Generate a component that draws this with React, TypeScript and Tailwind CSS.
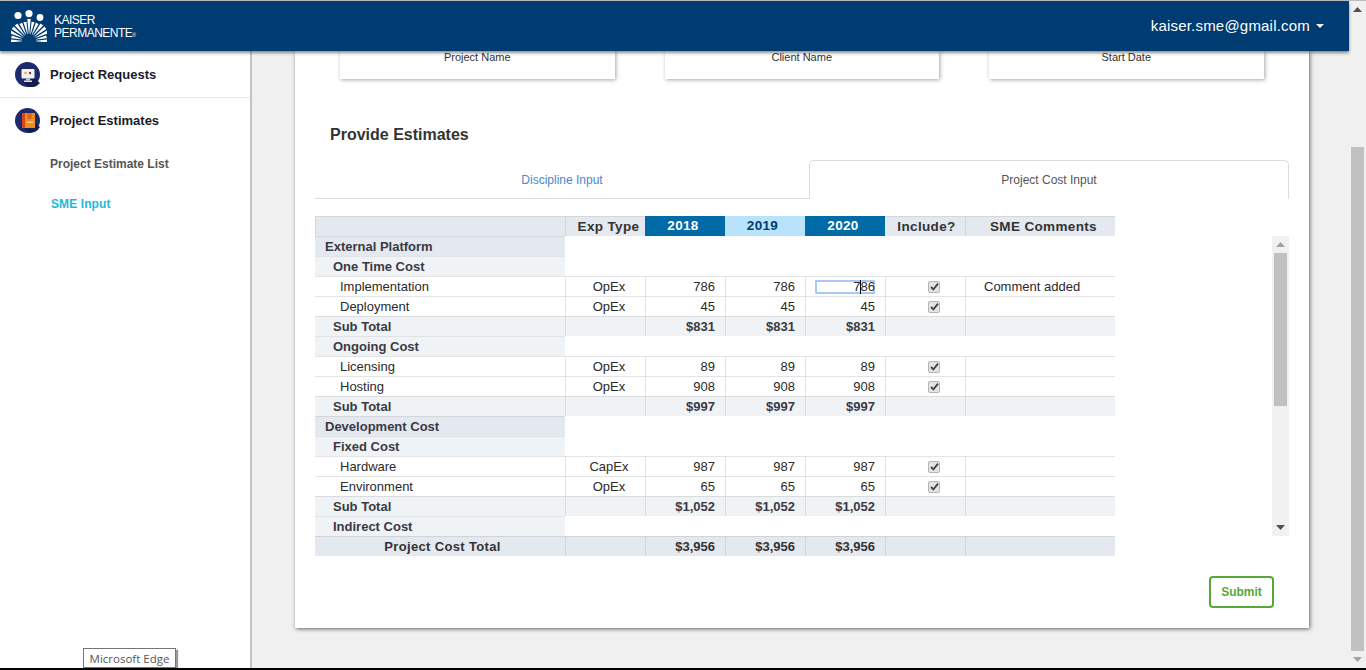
import React from 'react';

type RowKind = 'section' | 'group' | 'item' | 'sub';

interface CostRow {
  kind: RowKind;
  label: string;
  exp?: string;
  value?: string;
  comment?: string;
}

const ROWS: CostRow[] = [
  { kind: 'section', label: 'External Platform' },
  { kind: 'group', label: 'One Time Cost' },
  { kind: 'item', label: 'Implementation', exp: 'OpEx', value: '786', comment: 'Comment added' },
  { kind: 'item', label: 'Deployment', exp: 'OpEx', value: '45' },
  { kind: 'sub', label: 'Sub Total', value: '$831' },
  { kind: 'group', label: 'Ongoing Cost' },
  { kind: 'item', label: 'Licensing', exp: 'OpEx', value: '89' },
  { kind: 'item', label: 'Hosting', exp: 'OpEx', value: '908' },
  { kind: 'sub', label: 'Sub Total', value: '$997' },
  { kind: 'section', label: 'Development Cost' },
  { kind: 'group', label: 'Fixed Cost' },
  { kind: 'item', label: 'Hardware', exp: 'CapEx', value: '987' },
  { kind: 'item', label: 'Environment', exp: 'OpEx', value: '65' },
  { kind: 'sub', label: 'Sub Total', value: '$1,052' },
  { kind: 'group', label: 'Indirect Cost' },
];

const COLS = 'grid grid-cols-[250px_80px_80px_80px_80px_80px_150px] grid-rows-[20px] w-[800px] h-5 leading-4';

const Logo = () => {
  // sunburst of tapered rays under the three heads
  const rays = [-90, -77, -64, -51, -38, -25, -12, 0, 12, 25, 38, 51, 64, 77, 90];
  const pt = (a: number, r: number) => {
    const t = (a * Math.PI) / 180;
    return `${(18 + Math.sin(t) * r).toFixed(2)},${(31 - Math.cos(t) * r).toFixed(2)}`;
  };
  return (
    <svg width="36" height="32" viewBox="0 0 36 32" className="block">
      <circle cx="7" cy="5.5" r="3.6" fill="#fff" />
      <circle cx="18" cy="3.6" r="3.6" fill="#fff" />
      <circle cx="29" cy="7.5" r="3.4" fill="#fff" />
      {rays.map(a => {
        const outer = Math.abs(a) > 70 ? 18 : Math.abs(a) > 30 ? 21 : Math.abs(a) > 8 ? 19.5 : 22;
        return (
          <polygon
            key={a}
            points={`${pt(a - 1.5, 7)} ${pt(a + 1.5, 7)} ${pt(a + 4.5, outer)} ${pt(a - 4.5, outer)}`}
            fill="#fff"
          />
        );
      })}
    </svg>
  );
};

const RequestsIcon = () => (
  <svg width="25" height="25" viewBox="0 0 25 25" className="block shrink-0">
    <circle cx="12.5" cy="12.5" r="12.5" fill="#1d2a6b" />
    <path d="M19 16 L25 21 A12.5 12.5 0 0 1 13 25 L8 20 Z" fill="#141d52" />
    <rect x="6.5" y="7" width="13" height="9.5" rx="1" fill="#f2f2f2" />
    <rect x="11" y="16.5" width="4" height="2" fill="#c9c9c9" />
    <rect x="9" y="18.5" width="8" height="1.5" fill="#e2e2e2" />
    <circle cx="10.5" cy="11" r="1.2" fill="#e8a33a" />
    <circle cx="15" cy="11" r="1.2" fill="#a5281e" />
  </svg>
);

const EstimatesIcon = () => (
  <svg width="25" height="25" viewBox="0 0 25 25" className="block shrink-0">
    <circle cx="12.5" cy="12.5" r="12.5" fill="#1d2a6b" />
    <path d="M20 16 L25 19 A12.5 12.5 0 0 1 14 25 L9 20 Z" fill="#141d52" />
    <rect x="7" y="5" width="13" height="15" fill="#f08c1e" />
    <rect x="7" y="5" width="3" height="15" fill="#d4481c" />
    <rect x="12.5" y="5" width="4" height="6" fill="#d4681c" />
    <rect x="11.5" y="13.5" width="7" height="1.5" fill="#f8c878" />
  </svg>
);

const Checkbox = () => (
  <div className="w-3 h-3 bg-[#e4e4e4] border border-[#b4b4b4] rounded-[2px] flex items-center justify-center">
    <svg width="9" height="9" viewBox="0 0 9 9">
      <path d="M1 5 L3.4 7.4 L8 1.6" fill="none" stroke="#444" strokeWidth="1.8" />
    </svg>
  </div>
);

const Arrow = ({ up, color }: { up?: boolean; color: string }) => (
  <svg width="9" height="5" viewBox="0 0 9 5" className="block">
    <path d={up ? 'M0 5 L4.5 0 L9 5 Z' : 'M0 0 L9 0 L4.5 5 Z'} fill={color} />
  </svg>
);

const HeaderRow = () => (
  <div className={`${COLS} font-bold text-[13.5px] tracking-[0.35px] text-[#333]`}>
    <div className="bg-[#e4e8ef] border-t border-l border-[#d3d6db]" />
    <div className="bg-[#e4e8ef] border-t border-l border-[#d3d6db] flex items-center justify-center pl-[6px]">Exp Type</div>
    <div className="bg-[#006ba6] text-white flex items-center justify-center pr-[4px]">2018</div>
    <div className="bg-[#b9e3fb] text-[#003b71] flex items-center justify-center pr-[5px]">2019</div>
    <div className="bg-[#006ba6] text-white flex items-center justify-center pr-[4px]">2020</div>
    <div className="bg-[#e4e8ef] border-t border-[#d3d6db] flex items-center justify-center pl-[3px]">Include?</div>
    <div className="bg-[#e4e8ef] border-t border-l border-[#d3d6db] flex items-center justify-center pl-[6px]">SME Comments</div>
  </div>
);

const Row = ({ row, index }: { row: CostRow; index: number }) => {
  if (row.kind === 'section') {
    return (
      <div className={COLS}>
        <div className="bg-[#e4e8ef] border-t border-[#d3d6db] pl-[10px] flex items-center font-bold text-[13px] text-[#3a3a44]">
          {row.label}
        </div>
      </div>
    );
  }
  if (row.kind === 'group') {
    return (
      <div className={COLS}>
        <div className="bg-[#f0f3f6] border-t border-[#e0e3e6] pl-[18px] flex items-center font-bold text-[13px] text-[#3a3a44]">
          {row.label}
        </div>
      </div>
    );
  }
  if (row.kind === 'sub') {
    const cell = 'bg-[#f0f3f6] border-t border-l border-[#d8dbdf] flex items-center justify-end pr-[10px]';
    return (
      <div className={`${COLS} font-bold text-[13px] text-[#3a3a44]`}>
        <div className="bg-[#f0f3f6] border-t border-[#d8dbdf] pl-[18px] flex items-center">{row.label}</div>
        <div className={cell} />
        <div className={cell}>{row.value}</div>
        <div className={cell}>{row.value}</div>
        <div className={cell}>{row.value}</div>
        <div className={cell} />
        <div className={cell} />
      </div>
    );
  }
  const cell = 'border-t border-l border-[#e4e4e4] flex items-center';
  return (
    <div className={`${COLS} text-[13px] text-[#2a2a2a]`}>
      <div className="border-t border-[#e4e4e4] pl-[25px] flex items-center">{row.label}</div>
      <div className={`${cell} justify-center pl-[7px]`}>{row.exp}</div>
      <div className={`${cell} justify-end pr-[10px]`}>{row.value}</div>
      <div className={`${cell} justify-end pr-[10px]`}>{row.value}</div>
      <div className={`${cell} justify-end pr-[10px] relative`}>
        {index === 2 && <div className="absolute left-[9px] top-[3px] w-[60px] h-[14px] border-2 border-[#a9c8f5] rounded-[1px]" />}
        <span className="relative">{row.value}</span>
        {index === 2 && <div className="absolute left-[54px] top-[3px] w-px h-[14px] bg-black" />}
      </div>
      <div className={`${cell} pl-[42px]`}>
        <Checkbox />
      </div>
      <div className={`${cell} pl-[18px]`}>{row.comment}</div>
    </div>
  );
};

const TotalRow = () => {
  const cell = 'bg-[#e4e8ef] border-t border-l border-[#d0d3d8] flex items-center justify-end pr-[10px]';
  return (
    <div className={`${COLS} font-bold text-[13px] text-[#333]`}>
      <div className="bg-[#e4e8ef] border-t border-[#d0d3d8] flex items-center justify-center pl-[5px] tracking-[0.35px] text-[13px]">
        Project Cost Total
      </div>
      <div className={cell} />
      <div className={cell}>$3,956</div>
      <div className={cell}>$3,956</div>
      <div className={cell}>$3,956</div>
      <div className={cell} />
      <div className={cell} />
    </div>
  );
};

const App: React.FC = () => {
  return (
    <div className="w-[1366px] h-[670px] overflow-hidden flex flex-col relative bg-[#f0f0f0] font-['Liberation_Sans',Arial,sans-serif]">
      <div className="h-px bg-[#bdbdbd] shrink-0" />
      <div className="flex flex-1 min-h-0">
        <div className="w-[1349px] flex flex-col">
          {/* Top bar */}
          <div className="h-[50px] shrink-0 bg-[#003b71] flex items-center justify-between pl-[11px] pr-[25px] shadow-[0_2px_3px_rgba(0,0,0,0.45)] relative z-10">
            <div className="flex items-center gap-[7px] text-white">
              <Logo />
              <div className="text-[12px] leading-[13px] tracking-[-0.5px] pt-[3px]">
                <div>KAISER</div>
                <div>
                  PERMANENTE<span className="text-[5px] tracking-normal">®</span>
                </div>
              </div>
            </div>
            <div className="flex items-center gap-[6px] text-white text-[15px] tracking-[0.2px]">
              <span>kaiser.sme@gmail.com</span>
              <span className="w-0 h-0 border-x-[4px] border-x-transparent border-t-[4px] border-t-white" />
            </div>
          </div>

          <div className="flex flex-1 min-h-0">
            {/* Side nav */}
            <div className="w-[252px] shrink-0 bg-white border-r-2 border-[#c4c4c4]">
              <div className="h-[47px] flex items-center gap-[10px] pl-[15px] border-b border-[#ebebeb] font-bold text-[13px] text-[#1a1a2a]">
                <RequestsIcon />
                <span className="pt-[1px]">Project Requests</span>
              </div>
              <div className="h-[45px] flex items-center gap-[10px] pl-[15px] font-bold text-[13px] text-[#1a1a2a]">
                <EstimatesIcon />
                <span>Project Estimates</span>
              </div>
              <div className="pl-[50px] pt-[14px] font-bold text-[12px] text-[#555] leading-[14px]">Project Estimate List</div>
              <div className="pl-[51px] pt-[26px] font-bold text-[12px] text-[#1fb9d8] leading-[14px] tracking-[0.1px]">SME Input</div>
            </div>

            {/* Main */}
            <div className="flex-1 min-w-0 pl-[43px] pr-[40px]">
              <div className="h-[577px] bg-white shadow-[1px_1px_4px_rgba(0,0,0,0.6)] pl-[20px] flex flex-col">
                <div className="flex gap-[50px] pl-[25px]">
                  {['Project Name', 'Client Name', 'Start Date'].map(label => (
                    <div
                      key={label}
                      className="w-[274.5px] h-[28px] bg-white shadow-[1px_1px_4px_rgba(0,0,0,0.35)] text-center text-[11px] text-[#333] leading-[13px]"
                    >
                      {label}
                    </div>
                  ))}
                </div>

                <h2 className="pl-[15px] mt-[47px] font-bold text-[16px] leading-[18px] text-[#333]">Provide Estimates</h2>

                {/* Tabs */}
                <div className="flex w-[974px] h-[39px] mt-[16px]">
                  <div className="w-[494px] border-b border-[#dcdcdc] flex items-center justify-center text-[12px] text-[#4a87d0] pt-[1px]">
                    Discipline Input
                  </div>
                  <div className="w-[480px] border border-b-0 border-[#dcdcdc] rounded-t-[5px] flex items-center justify-center text-[12px] text-[#555]">
                    Project Cost Input
                  </div>
                </div>

                {/* Cost table */}
                <div className="mt-[17px] w-[974px]">
                  <HeaderRow />
                  <div className="flex justify-between h-[300px]">
                    <div>
                      {ROWS.map((row, i) => (
                        <Row key={i} row={row} index={i} />
                      ))}
                    </div>
                    <div className="w-[17px] bg-[#f1f1f1] flex flex-col items-center">
                      <div className="h-[17px] flex items-center justify-center">
                        <Arrow up color="#a3a3a3" />
                      </div>
                      <div className="w-[13px] h-[153px] bg-[#c1c1c1]" />
                      <div className="flex-1" />
                      <div className="h-[17px] flex items-center justify-center">
                        <Arrow color="#505050" />
                      </div>
                    </div>
                  </div>
                  <TotalRow />
                </div>

                <div className="w-[959px] flex justify-end mt-[20px]">
                  <button className="w-[65px] h-[32px] border-2 border-[#56a83a] rounded-[4px] bg-white font-bold text-[12px] text-[#56a83a]">
                    Submit
                  </button>
                </div>
              </div>
            </div>
          </div>
        </div>

        {/* Page scrollbar */}
        <div className="w-[17px] shrink-0 flex flex-col items-center">
          <div className="h-[17px] flex items-center justify-center">
            <Arrow up color="#505050" />
          </div>
          <div className="h-[129px]" />
          <div className="w-[13px] h-[504px] bg-[#c1c1c1]" />
          <div className="flex-1 flex items-center justify-center">
            <Arrow color="#a3a3a3" />
          </div>
        </div>
      </div>
      <div className="h-[2px] bg-black shrink-0" />

      {/* Browser tooltip */}
      <div className="absolute left-[83px] top-[648px] w-[93px] h-[20px] bg-white border border-[#767676] shadow-[2px_2px_1px_rgba(0,0,0,0.4)] flex items-center justify-center pt-[1px] text-[11.5px] text-[#575757] font-['Open_Sans',sans-serif]">
        Microsoft Edge
      </div>
    </div>
  );
};

export default App;
